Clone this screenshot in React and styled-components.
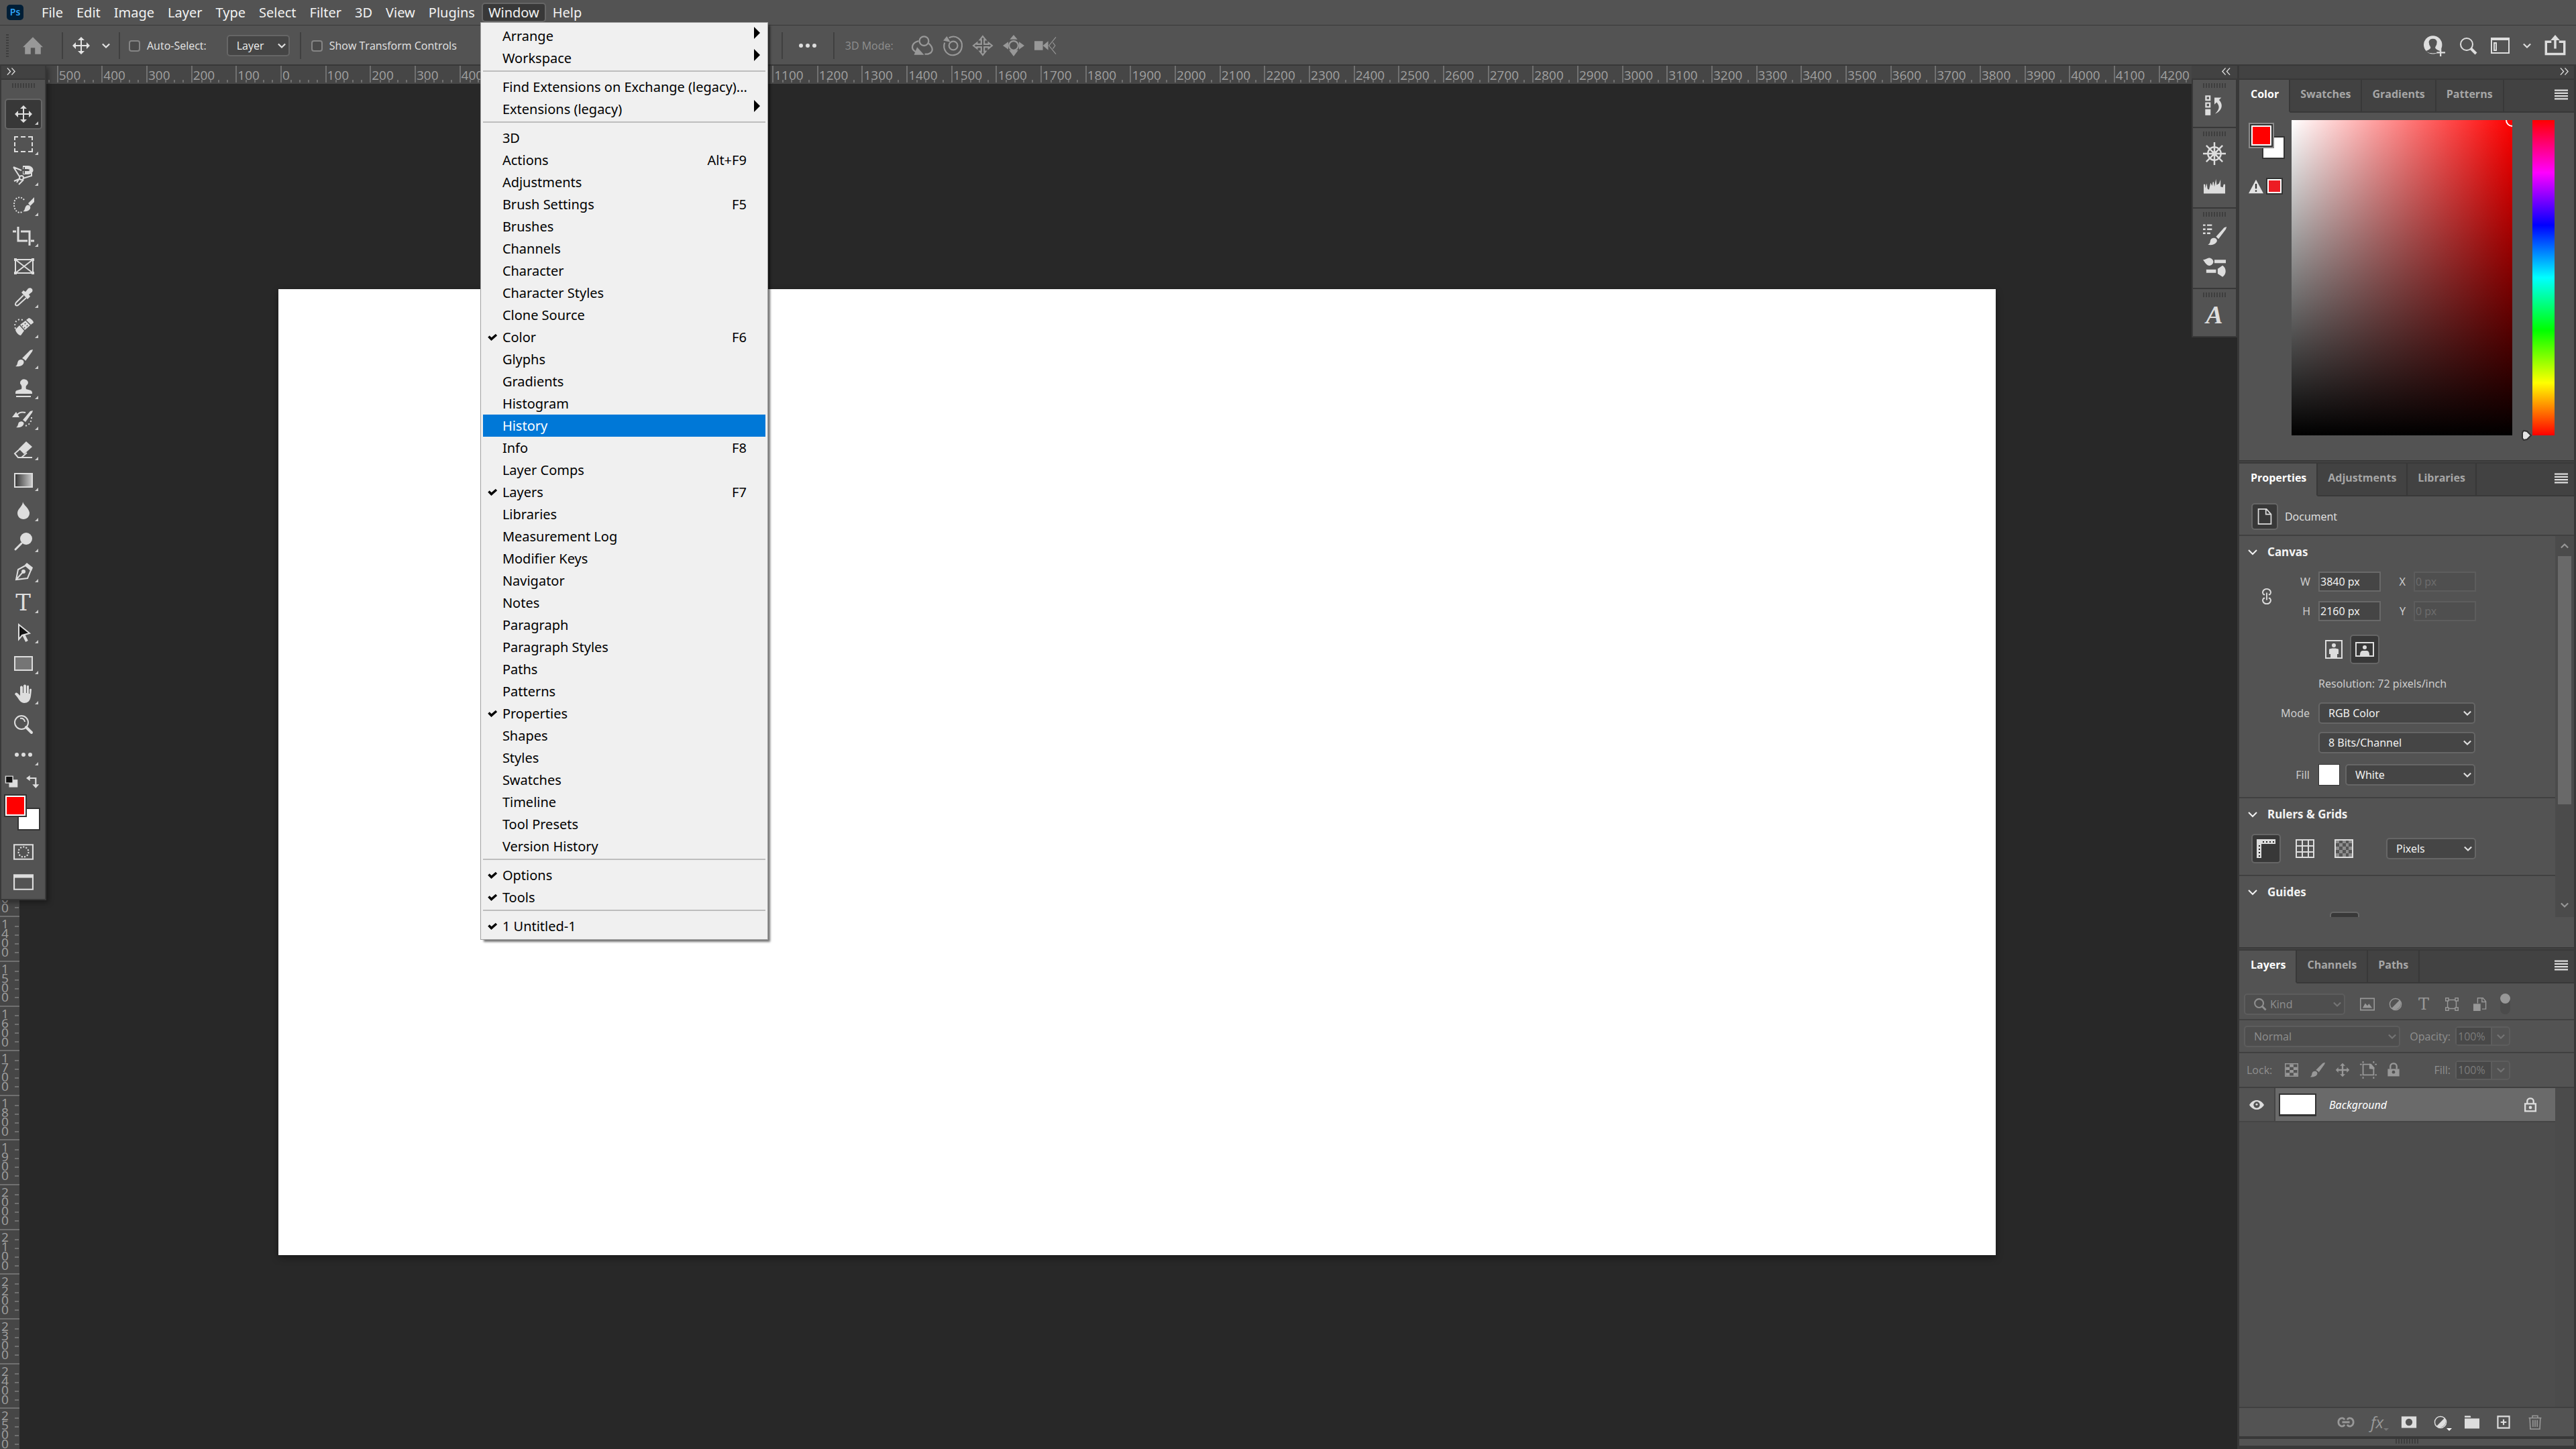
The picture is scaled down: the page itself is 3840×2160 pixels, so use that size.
import React from "react"
import styled, { createGlobalStyle, css } from "styled-components"

const colors = {
	panel: "#535353",
	line: "#383838",
	strip: "#424242",
	stage: "#282828",
	field: "#454545",
	fieldBorder: "#666666",
	text: "#e4e4e4",
	dim: "#8f8f8f",
}

const GlobalStyle = createGlobalStyle`
	*, *::before, *::after {
		box-sizing: border-box;
	}

	body {
		margin: 0;
		background: ${colors.stage};
		color: ${colors.text};
		font: 16px/24px "Open Sans", "Noto Sans", sans-serif;
	}

	button, input, select {
		margin: 0;
		padding: 0;
		border: 0;
		background: none;
		color: inherit;
		font: inherit;
	}

	svg {
		display: block;
		flex: none;
	}
`

/* ---------- icons ---------- */

function Icon({ size = 28, children, ...rest }) {
	return (
		<svg
			width={size}
			height={size}
			viewBox="0 0 28 28"
			fill="none"
			stroke="currentColor"
			strokeWidth="2"
			aria-hidden="true"
			overflow="visible"
			{...rest}
		>
			{children}
		</svg>
	)
}

const solid = { fill: "currentColor", stroke: "none" }

const MoveIcon = props => (
	<Icon {...props}>
		<path d="M14 4v20M4 14h20" />
		<path {...solid} d="M14 1l5 5h-10zM14 27l5-5h-10zM1 14l5-5v10zM27 14l-5-5v10z" />
	</Icon>
)

const MarqueeIcon = () => (
	<Icon>
		<path d="M1 8V3h5M10 3h7M21 3h6v5M27 11v6M27 20v5h-6M17 25h-7M6 25H1v-5M1 17v-6" />
	</Icon>
)

const LassoIcon = () => (
	<Icon>
		<path d="M-1 2l9 14M-1 2l12 5M8 19L4 25M13 19l13-4v-4M0 23l7-3M7 28l7-7" />
		<circle cx="11" cy="18" r="3" />
		<path {...solid} d="M13 0h8a7 6 0 010 13h-8v-5h7a2 1 0 000-3h-7z" />
		<path d="M15 2v3M15 8v4" stroke={colors.panel} strokeWidth="2" />
	</Icon>
)

const QuickSelectIcon = () => (
	<Icon>
		<path d="M15 6C11 1 4 1 1 7c-3 9 1 17 7 18 2 0 4-1 5-2" strokeDasharray="2 2" />
		<path {...solid} d="M13 23c4-1 2-6 6-9 4-1 6 2 5 5-2 4-7 5-11 4zM21 11l9-9v7l-6 6z" />
	</Icon>
)

const CropIcon = () => (
	<Icon strokeWidth="3">
		<path d="M6 0v21h14M10 7h13v21M-2 7h5M25 21h5" />
	</Icon>
)

const FrameIcon = () => (
	<Icon>
		<path d="M2 4h26v20H2zM2 4l26 20M28 4L2 24" />
		<path {...solid} d="M0 2h4v4H0zM26 2h4v4h-4zM0 22h4v4H0zM26 22h4v4h-4z" />
	</Icon>
)

const EyedropperIcon = () => (
	<Icon>
		<path d="M14 11L3 22c-3 4 1 6 4 3l11-10" />
		<path {...solid} d="M11 7l3-3 3 2 4-5c4-2 8 1 6 5l-5 4 2 3-4 4z" />
	</Icon>
)

const HealIcon = () => (
	<Icon>
		<path d="M2 16C-1 6 5 0 13 3" strokeDasharray="2 3" />
		<path {...solid} d="M18 3l4-3c2 0 7 4 7 7l-4 3zM9 10l8-6 7 7-8 7zM2 17l6-6 7 8-5 7c-3 0-8-5-8-9z" />
		<path d="M12 11l1 1M16 8l1 1M15 14l1 1M19 11l1 1" stroke={colors.panel} />
	</Icon>
)

const BrushIcon = props => (
	<Icon {...props}>
		<path {...solid} d="M2 26c4-2 2-6 5-9 5-3 9 1 7 5-2 4-8 5-12 4zM12 14L24 2l4-1-1 3-10 14c-1-2-3-3-5-4z" />
	</Icon>
)

const StampIcon = () => (
	<Icon>
		<path {...solid} d="M9 6a6 5 0 1111 2c-2 2-3 3-2 7l7 2c2 1 2 3 2 5H2c0-3 0-4 2-5l7-2c1-4 0-5-1-7-1-1-1-1-1-2z" />
		<path d="M3 26h22" />
	</Icon>
)

const HistoryBrushIcon = () => (
	<Icon>
		<path d="M5 7c3-4 8-4 12-3" />
		<path {...solid} d="M-3 11l6-8 5 8z" />
		<path {...solid} d="M3 26c4-2 2-6 5-8 4-2 8 1 6 4-2 4-7 5-11 4zM13 15L24 2l4-1-1 3-10 14z" />
		<path d="M26 11c0 6-3 12-10 13" strokeDasharray="2 3" />
	</Icon>
)

const EraserIcon = () => (
	<Icon>
		<path d="M9 13l-8 7 5 6h21M6 26h5l8-7" />
		<path {...solid} d="M18 2l9 8-12 11-8-8z" />
	</Icon>
)

const GradientIcon = () => (
	<Icon>
		<defs>
			<linearGradient id="tool-gradient">
				<stop stopColor="#333" />
				<stop offset="1" stopColor="#ccc" />
			</linearGradient>
		</defs>
		<path fill="url(#tool-gradient)" d="M1 4h26v20H1z" />
	</Icon>
)

const BlurIcon = () => (
	<Icon>
		<path {...solid} d="M13 1c1 5 10 10 10 17 0 5-4 9-9 9s-9-4-9-9C5 11 13 8 13 1z" />
	</Icon>
)

const DodgeIcon = () => (
	<Icon>
		<ellipse {...solid} cx="18" cy="10" rx="9" ry="9" />
		<path d="M11 17L2 26" strokeWidth="3" strokeLinecap="round" />
	</Icon>
)

const PenIcon = () => (
	<Icon>
		<path d="M3 26L6 11l11-6 8 7-5 12zM3 26l10-11" />
		<circle {...solid} cx="14" cy="14" r="3" />
		<path {...solid} d="M16 4l3-3 9 7-2 5z" />
	</Icon>
)

const PathSelectIcon = () => (
	<Icon>
		<path fill="#111" d="M7 2v22l5-6 11-3z" />
		<path d="M14 17l5 10" strokeWidth="4" />
	</Icon>
)

const RectangleIcon = () => (
	<Icon>
		<path fill="#757575" d="M1 4h26v20H1z" />
	</Icon>
)

const HandIcon = () => (
	<Icon>
		<path {...solid} d="M2 13c2-2 5 2 7 4V4c1-2 3-2 4 0v9h1V2c1-2 3-2 4 0v11h1V3c1-2 3-1 3 0v11h1V8c1-2 3-1 3 0-1 8 0 20-11 20-7 0-9-9-14-13z" />
	</Icon>
)

const ZoomIcon = () => (
	<Icon>
		<circle cx="11" cy="11" r="10" />
		<path d="M9 5c4-1 7 2 7 5" />
		<path d="M18 18l8 8" strokeWidth="4" strokeLinecap="round" />
	</Icon>
)

const DotsIcon = () => (
	<Icon>
		<circle {...solid} cx="4" cy="14" r="3" />
		<circle {...solid} cx="14" cy="14" r="3" />
		<circle {...solid} cx="24" cy="14" r="3" />
	</Icon>
)

const QuickMaskIcon = () => (
	<Icon size={30}>
		<path d="M1 4h26v20H1z" />
		<ellipse cx="14" cy="14" rx="7" ry="7" strokeDasharray="2 2" />
	</Icon>
)

const ScreenModeIcon = () => (
	<Icon size={30}>
		<path d="M1 4h26v20H1z" />
		<path {...solid} d="M1 4h26v4H1z" />
	</Icon>
)

const DefaultColorsIcon = () => (
	<Icon size={20}>
		<path {...solid} d="M9 10h18v16H9z" />
		<path fill="#111" d="M2 3h15v14H2z" />
	</Icon>
)

const SwapIcon = () => (
	<Icon size={20} strokeWidth="3">
		<path d="M6 7h14v14" />
		<path {...solid} d="M0 7l8-6v12zM20 28l-7-8h14z" />
	</Icon>
)

const HomeIcon = () => (
	<Icon size={30}>
		<path {...solid} d="M14 2l14 14h-3v10h-8v-9h-6v9H3V16H0z" />
	</Icon>
)

const ChevronIcon = ({ size = 12, up, ...rest }) => (
	<Icon size={size} strokeWidth="5" {...rest}>
		<path d={up ? "M2 20L14 8l12 12" : "M2 8l12 12L26 8"} />
	</Icon>
)

const Orbit3DIcon = () => (
	<Icon size={32}>
		<circle cx="17" cy="8" r="6" />
		<path d="M10 8C1 10-1 18 6 22M23 11c6 5 7 12-1 14h-4" />
		<path {...solid} d="M4 26l4-10 9 10z" />
	</Icon>
)

const Roll3DIcon = () => (
	<Icon size={30}>
		<circle cx="15" cy="14" r="6" />
		<path d="M9 3c10-5 19 3 18 12-1 12-15 16-22 8-3-4-4-8-2-13" />
		<path {...solid} d="M1 7l5-6 5 8z" />
	</Icon>
)

const Pan3DIcon = () => (
	<Icon size={30}>
		<path d="M14 1l4 5h-2v6h6v-2l5 4-5 4v-2h-6v6h2l-4 5-4-5h2v-6H6v2l-5-4 5-4v2h6V6h-2z" />
	</Icon>
)

const Slide3DIcon = () => (
	<Icon size={32}>
		<circle cx="14" cy="14" r="6" />
		<path {...solid} d="M14 0l5 6H9zM14 28l6-8H8zM0 14l7-5v10zM28 14l-7-5v10z" />
	</Icon>
)

const Camera3DIcon = () => (
	<Icon size={32}>
		<path {...solid} d="M0 8h11v12H0zM11 14l7-6v12z" />
		<path d="M28 3L19 14l9 11M24 10l3 4-3 4" strokeWidth="1" />
	</Icon>
)

const UserAddIcon = () => (
	<Icon size={32}>
		<circle {...solid} cx="12" cy="13" r="12" />
		<path fill={colors.panel} stroke="none" d="M12 5c4 0 6 3 5 6 0 3-2 4-2 6 1 2 4 3 6 4-3 4-15 4-18 0 2-1 5-2 6-4 0-2-2-3-2-6-1-3 1-6 5-6z" />
		<path d="M22 18v10M17 23h11" />
	</Icon>
)

const SearchIcon = props => (
	<Icon {...props}>
		<circle cx="12" cy="12" r="9" />
		<path d="M18 18l8 8" strokeWidth="4" />
	</Icon>
)

const WorkspaceIcon = () => (
	<Icon>
		<path d="M1 3h26v22H1z" />
		<path {...solid} d="M1 2h26v4H1z" />
		<path d="M5 10h3v11H5z" />
	</Icon>
)

const ShareIcon = () => (
	<Icon size={32} strokeWidth="3">
		<path d="M9 9H2v16h24V9h-7M14 6v12" />
		<path {...solid} d="M14 0l6 7H8z" />
	</Icon>
)

const HistoryPanelIcon = () => (
	<Icon size={32}>
		<path d="M3 2h5v5H3zM3 11h5v5H3z" />
		<path {...solid} d="M2 19h7v8H2z" />
		<path {...solid} d="M14 4h9l-3 3c6 6 4 14-5 18 6-6 6-10 2-15l-3 3z" />
	</Icon>
)

const NavigatorIcon = () => (
	<Icon size={34} strokeWidth="2">
		<circle cx="14" cy="14" r="8" />
		<path d="M14 0v28M0 14h28M4 4l20 20M24 4L4 24" />
		<circle {...solid} cx="14" cy="14" r="3" />
	</Icon>
)

const HistogramIcon = () => (
	<Icon size={32}>
		<path {...solid} d="M0 24V12h2v5l2-6 1 7 2 1 2-9 2 4 1-5h1l1 6 2-10 1 8 3-2 2-5v9l3 1 1-4h2v12z" />
	</Icon>
)

const BrushSettingsIcon = () => (
	<Icon size={34}>
		<path d="M0 3h3M0 8h3M0 13h3M5 3h6M5 8h6M5 13h4" />
		<path {...solid} d="M6 27c4-2 2-5 4-7 4-3 8 0 7 3-2 4-7 5-11 4zM16 17L26 6l3-1-1 3-9 12z" />
	</Icon>
)

const BrushesIcon = () => (
	<Icon size={34} strokeWidth="4">
		<path d="M14 8h14M4 20h12" />
		<path {...solid} d="M0 6c4 0 6-3 9-2 5 2 5 7 0 9-4 1-6-3-9-7zM18 17l6-4c5 3 5 11 0 14l-6-4z" />
	</Icon>
)

const DoubleChevronIcon = ({ left }) => (
	<Icon size={13} strokeWidth="3">
		<path d={left ? "M12 3L2 14l10 11M26 3L16 14l10 11" : "M2 3l10 11L2 25M16 3l10 11-10 11"} />
	</Icon>
)

const PanelMenuIcon = () => (
	<Icon size={20}>
		<path d="M0 5h28M0 11h28M0 17h28M0 23h28" strokeWidth="3" />
	</Icon>
)

const WarningIcon = () => (
	<Icon size={22}>
		<path {...solid} d="M14 1l14 26H0z" />
		<path d="M14 9v9M14 21v3" stroke="#333" strokeWidth="3" />
	</Icon>
)

const DocumentIcon = () => (
	<Icon size={24}>
		<path d="M3 1h14l8 9v17H3zM16 1v9h8" />
	</Icon>
)

const LinkIcon = () => (
	<Icon size={26}>
		<path d="M11 11H9C6 8 8 2 14 2s8 6 5 9h-2M11 17H9c-3 3-1 9 5 9s8-6 5-9h-2M14 8v12" />
	</Icon>
)

const PortraitIcon = () => (
	<Icon>
		<path d="M2 1h24v26H2z" />
		<circle {...solid} cx="14" cy="8" r="3" />
		<path {...solid} d="M7 14c1-2 13-2 14 0v7h-2v5H9v-5H7z" />
	</Icon>
)

const LandscapeIcon = () => (
	<Icon>
		<path d="M1 4h26v20H1z" />
		<circle {...solid} cx="14" cy="11" r="3" />
		<path {...solid} d="M7 23c0-4 1-7 4-7h6c3 0 4 3 4 7z" />
	</Icon>
)

const RulersIcon = () => (
	<Icon>
		<path {...solid} d="M0 0h28v7H7v21H0z" />
		<path d="M9 4h18" stroke="#222" strokeDasharray="2 3" />
		<path d="M4 9v18" stroke="#222" strokeDasharray="2 3" />
	</Icon>
)

const GridIcon = () => (
	<Icon>
		<path d="M1 1h26v26H1zM10 1v26M19 1v26M1 10h26M1 19h26" />
	</Icon>
)

const TransparencyIcon = () => (
	<Icon>
		<path fill="#8d8d8d" d="M1 1h26v26H1z" />
		<path fill="#555" stroke="none" d="M2 6h5v5H2zM12 6h5v5h-5zM21 6h5v5h-5zM7 2h5v4H7zM17 2h4v4h-4zM7 11h5v5H7zM17 11h4v5h-4zM2 16h5v5H2zM12 16h5v5h-5zM21 16h5v5h-5zM7 21h5v5H7zM17 21h4v5h-4z" />
	</Icon>
)

const ImageFilterIcon = () => (
	<Icon size={22}>
		<path d="M1 3h26v22H1z" />
		<path {...solid} d="M5 21l5-9 4 5 3-4 6 8z" />
	</Icon>
)

const AdjustmentIcon = () => (
	<Icon size={20}>
		<circle cx="14" cy="14" r="12" />
		<path {...solid} d="M23 5A13 13 0 015 23z" />
	</Icon>
)

const ShapeFilterIcon = () => (
	<Icon size={20}>
		<path d="M5 5h18v18H5z" />
		<path fill={colors.panel} d="M1 1h6v6H1zM21 1h6v6h-6zM1 21h6v6H1zM21 21h6v6h-6z" />
	</Icon>
)

const SmartFilterIcon = () => (
	<Icon size={20}>
		<path d="M9 12V1h11l6 7v16h-8M18 1v8h8" />
		<path {...solid} d="M0 13h15v15H0z" />
	</Icon>
)

const CheckerIcon = () => (
	<Icon size={20}>
		<path d="M1 1h26v26H1z" />
		<path {...solid} d="M10 2h8v6h-8zM2 8h8v6H2zM18 8h8v6h-8zM10 14h8v6h-8zM2 20h8v6H2zM18 20h8v6h-8z" />
	</Icon>
)

const ArtboardLockIcon = () => (
	<Icon size={26}>
		<path d="M6 5h11l6 6v11H6zM1 5h3M1 22h3M25 22h3M25 5h3M6 0v3M6 25v3M23 25v3M23 0v3" />
		<path {...solid} d="M16 4h3l5 6v3l-8-1z" />
	</Icon>
)

const LockSolidIcon = () => (
	<Icon size={22}>
		<path d="M8 12V7c0-7 12-7 12 0v5" strokeWidth="3" />
		<path {...solid} d="M3 12h22v14H3z" />
		<circle cx="14" cy="18" r="3" fill={colors.panel} stroke="none" />
	</Icon>
)

const LockIcon = () => (
	<Icon size={22} strokeWidth="3">
		<path d="M8 11V7c0-7 12-7 12 0v4M4 12h20v14H4z" />
		<circle {...solid} cx="14" cy="19" r="3" />
	</Icon>
)

const EyeIcon = () => (
	<Icon size={22}>
		<path {...solid} d="M0 14C7 2 21 2 28 14 21 26 7 26 0 14z" />
		<circle cx="14" cy="14" r="6" fill={colors.panel} stroke="none" />
		<circle {...solid} cx="14" cy="13" r="2" />
	</Icon>
)

const ChainIcon = () => (
	<Icon size={26} strokeWidth="3">
		<path d="M12 18c-3 5-10 2-10-4s7-9 10-4M16 10c3-5 10-2 10 4s-7 9-10 4M8 14h12" />
	</Icon>
)

const MaskIcon = () => (
	<Icon size={24}>
		<path {...solid} d="M1 4h26v20H1z" />
		<circle cx="14" cy="14" r="6" fill={colors.panel} stroke="none" />
	</Icon>
)

const FolderIcon = () => (
	<Icon size={22}>
		<path {...solid} d="M0 2h11l1 3H0zM0 7h28v19H0z" />
	</Icon>
)

const NewLayerIcon = () => (
	<Icon size={20} strokeWidth="3">
		<path d="M2 2h24v24H2zM14 8v12M8 14h12" />
	</Icon>
)

const TrashIcon = () => (
	<Icon size={22}>
		<path d="M2 6h24M9 6V2h10v4M4 6l1 21h18l1-21M10 10v13M14 10v13M18 10v13" />
	</Icon>
)

/* ---------- shared controls ---------- */

const PlainButton = styled.button`
	display: flex;
	align-items: center;
	justify-content: center;
	width: ${props => props.$width || 28}px;
	height: ${props => props.$height || 32}px;
	flex: none;
	color: ${props => (props.$dim ? "#989898" : "#dddddd")};
`

const ToggleButton = styled.button`
	display: flex;
	align-items: center;
	justify-content: center;
	width: ${props => props.$size || 44}px;
	height: ${props => props.$size || 44}px;
	flex: none;
	border: 2px solid transparent;
	border-radius: 5px;
	color: #dddddd;

	${props => props.$active && css`
		background: #383838;
		border-color: ${colors.fieldBorder};
	`}
`

const SelectBox = styled.span`
	display: grid;
	align-items: center;
	width: ${props => (props.$width ? `${props.$width}px` : "auto")};
	flex: ${props => (props.$width ? "none" : "1")};
	color: ${props => (props.$dim ? colors.dim : "#f0f0f0")};

	& > * {
		grid-area: 1 / 1;
	}

	& > svg {
		justify-self: end;
		margin-right: 6px;
		color: ${props => (props.$dim ? "#747474" : "#e0e0e0")};
		pointer-events: none;
	}
`

const SelectElement = styled.select`
	width: 100%;
	height: 32px;
	padding: 0 20px 0 ${props => props.$inset || 13}px;
	appearance: none;
	background: ${props => (props.$dim ? "#4e4e4e" : colors.field)};
	border: 2px solid ${props => (props.$dim ? "#5d5d5d" : colors.fieldBorder)};
	border-radius: 5px;
	opacity: 1;
	color: inherit;
`

const SelectLead = styled.span`
	z-index: 1;
	margin-left: 14px;
	pointer-events: none;
`

function Select({ id, label, value, width, dim, inset, lead }) {
	return (
		<SelectBox $width={width} $dim={dim}>
			<SelectElement id={id} aria-label={label} defaultValue={value} disabled={dim} $dim={dim} $inset={inset}>
				<option>{value}</option>
			</SelectElement>
			{lead && <SelectLead>{lead}</SelectLead>}
			<ChevronIcon />
		</SelectBox>
	)
}

const Grip = styled.div`
	width: ${props => (props.$vertical ? 4 : 34)}px;
	height: ${props => (props.$vertical ? 34 : 7)}px;
	flex: none;
	background: repeating-linear-gradient(
		${props => (props.$vertical ? "180deg" : "90deg")},
		#3e3e3e 0 2px,
		transparent 2px 4px
	);
`

/* ---------- menu bar ---------- */

const menuNames = ["File", "Edit", "Image", "Layer", "Type", "Select", "Filter", "3D", "View", "Plugins", "Window", "Help"]

const windowMenu = [
	[
		{ name: "Arrange", sub: true },
		{ name: "Workspace", sub: true },
	],
	[
		{ name: "Find Extensions on Exchange (legacy)..." },
		{ name: "Extensions (legacy)", sub: true },
	],
	[
		{ name: "3D" },
		{ name: "Actions", keys: "Alt+F9" },
		{ name: "Adjustments" },
		{ name: "Brush Settings", keys: "F5" },
		{ name: "Brushes" },
		{ name: "Channels" },
		{ name: "Character" },
		{ name: "Character Styles" },
		{ name: "Clone Source" },
		{ name: "Color", keys: "F6", checked: true },
		{ name: "Glyphs" },
		{ name: "Gradients" },
		{ name: "Histogram" },
		{ name: "History", active: true },
		{ name: "Info", keys: "F8" },
		{ name: "Layer Comps" },
		{ name: "Layers", keys: "F7", checked: true },
		{ name: "Libraries" },
		{ name: "Measurement Log" },
		{ name: "Modifier Keys" },
		{ name: "Navigator" },
		{ name: "Notes" },
		{ name: "Paragraph" },
		{ name: "Paragraph Styles" },
		{ name: "Paths" },
		{ name: "Patterns" },
		{ name: "Properties", checked: true },
		{ name: "Shapes" },
		{ name: "Styles" },
		{ name: "Swatches" },
		{ name: "Timeline" },
		{ name: "Tool Presets" },
		{ name: "Version History" },
	],
	[
		{ name: "Options", checked: true },
		{ name: "Tools", checked: true },
	],
	[
		{ name: "1 Untitled-1", checked: true },
	],
]

const MenuBarElement = styled.nav`
	display: flex;
	align-items: flex-start;
	height: 38px;
	padding: 4px 0 0 10px;
	border-bottom: 1px solid ${colors.line};
	background: ${colors.panel};
`

const Logo = styled.span`
	width: 25px;
	height: 23px;
	margin: 3px 17px 0 0;
	border-radius: 5px;
	background: #001e36;
	color: #31a8ff;
	font-size: 14px;
	font-weight: 600;
	line-height: 22px;
	text-align: center;
`

const MenuSlot = styled.div`
	position: relative;
`

const MenuName = styled.button`
	display: block;
	height: 29px;
	padding: 0 8px;
	border: 2px solid ${props => (props.$open ? colors.fieldBorder : "transparent")};
	border-radius: 5px;
	background: ${props => (props.$open ? "#383838" : "none")};
	color: #f2f2f2;
	font-family: "Noto Sans", "Open Sans", sans-serif;
	font-size: 20px;
	line-height: 25px;
`

const MenuElement = styled.div`
	position: absolute;
	z-index: 10;
	top: 100%;
	left: -2px;
	width: 429px;
	padding: 3px 0;
	border: 1px solid #a0a0a0;
	background: #f0f0f0;
	box-shadow: 4px 4px 3px -1px rgba(0, 0, 0, 0.55);
	color: #000000;
`

const MenuItem = styled.button`
	display: grid;
	grid-template-columns: 16px 1fr auto;
	align-items: center;
	column-gap: 6px;
	width: calc(100% - 6px);
	height: 33px;
	margin: 0 3px;
	padding: 0 28px 0 7px;
	background: ${props => (props.$active ? "#0078d7" : "transparent")};
	color: ${props => (props.$active ? "#ffffff" : "#000000")};
	font-family: "Noto Sans", "Open Sans", sans-serif;
	font-size: 20px;
	line-height: 32px;
	text-align: left;
	white-space: nowrap;
`

const SubArrow = styled.svg`
	margin: 0 -20px 10px 11px;
`

const MenuLine = styled.hr`
	height: 2px;
	margin: 2px 3px 6px;
	border: 0;
	background: #bdbdbd;
`

function WindowMenu() {
	return (
		<MenuElement role="menu">
			{windowMenu.map((group, index) => (
				<React.Fragment key={index}>
					{index > 0 && <MenuLine />}
					{group.map(item => (
						<MenuItem key={item.name} role="menuitem" $active={item.active}>
							{item.checked ? (
								<Icon size={14} strokeWidth="7">
									<path d="M3 11l8 8L26 6" />
								</Icon>
							) : <span />}
							<span>{item.name}</span>
							{item.keys && <span>{item.keys}</span>}
							{item.sub && (
								<SubArrow width="9" height="18" viewBox="0 0 9 18" aria-hidden="true">
									<path d="M0 0l9 9-9 9z" />
								</SubArrow>
							)}
						</MenuItem>
					))}
				</React.Fragment>
			))}
		</MenuElement>
	)
}

function MenuBar() {
	return (
		<MenuBarElement>
			<Logo>Ps</Logo>
			{menuNames.map(name => (
				<MenuSlot key={name}>
					<MenuName $open={name === "Window"}>{name}</MenuName>
					{name === "Window" && <WindowMenu />}
				</MenuSlot>
			))}
		</MenuBarElement>
	)
}

/* ---------- options bar ---------- */

const OptionsElement = styled.header`
	display: flex;
	align-items: center;
	height: 60px;
	padding: 2px 15px 0 9px;
	border-bottom: 2px solid ${colors.line};
	background: ${colors.panel};
`

const Divider = styled.span`
	width: 2px;
	height: 40px;
	margin: 0 ${props => props.$gap}px;
	flex: none;
	background: #404040;
`

const CheckLabel = styled.label`
	display: flex;
	align-items: center;
	gap: 10px;
	white-space: nowrap;
`

const CheckInput = styled.input`
	width: 17px;
	height: 17px;
	appearance: none;
	border: 2px solid #858585;
	border-radius: 4px;
	background: #4a4a4a;
`

const AlignGroup = styled.div`
	width: 469px;
	flex: none;
`

const DimText = styled.span`
	margin-right: 26px;
	color: ${colors.dim};
`

const OptionCluster = styled.div`
	display: flex;
	align-items: center;
	gap: ${props => props.$gap || 0}px;
	margin-left: ${props => (props.$end ? "auto" : `${props.$before || 0}px`)};
`

function OptionsBar() {
	return (
		<OptionsElement>
			<Grip $vertical />
			<OptionCluster $before={6}>
				<PlainButton $width={60} $dim aria-label="Home"><HomeIcon /></PlainButton>
			</OptionCluster>
			<Divider $gap={13} />
			<OptionCluster $gap={17}>
				<MoveIcon />
				<ChevronIcon />
			</OptionCluster>
			<Divider $gap={13} />
			<CheckLabel>
				<CheckInput type="checkbox" />
				Auto-Select:
			</CheckLabel>
			<OptionCluster $before={30}>
				<Select label="Auto-select target" value="Layer" width={94} />
			</OptionCluster>
			<Divider $gap={15} />
			<CheckLabel>
				<CheckInput type="checkbox" />
				Show Transform Controls
			</CheckLabel>
			<AlignGroup />
			<Divider $gap={15} />
			<PlainButton $width={44} aria-label="More options"><DotsIcon /></PlainButton>
			<Divider $gap={16} />
			<DimText>3D Mode:</DimText>
			<OptionCluster $gap={15}>
				<PlainButton $width={32} $dim aria-label="Orbit"><Orbit3DIcon /></PlainButton>
				<PlainButton $width={30} $dim aria-label="Roll"><Roll3DIcon /></PlainButton>
				<PlainButton $width={30} $dim aria-label="Pan"><Pan3DIcon /></PlainButton>
				<PlainButton $width={32} $dim aria-label="Slide"><Slide3DIcon /></PlainButton>
				<PlainButton $width={32} $dim aria-label="Camera"><Camera3DIcon /></PlainButton>
			</OptionCluster>
			<OptionCluster $gap={20} $end>
				<PlainButton $width={32} aria-label="Invite"><UserAddIcon /></PlainButton>
				<PlainButton aria-label="Search"><SearchIcon /></PlainButton>
				<PlainButton aria-label="Workspace"><WorkspaceIcon /></PlainButton>
				<PlainButton $width={12} aria-label="Workspace list"><ChevronIcon /></PlainButton>
				<PlainButton $width={32} aria-label="Share"><ShareIcon /></PlainButton>
			</OptionCluster>
		</OptionsElement>
	)
}

/* ---------- toolbox ---------- */

const TypeGlyph = styled.span`
	font-family: "DejaVu Serif", serif;
	font-size: ${props => props.$size}px;
	line-height: 28px;
`

const tools = [
	{ name: "Move", icon: <MoveIcon />, active: true },
	{ name: "Rectangular Marquee", icon: <MarqueeIcon /> },
	{ name: "Magnetic Lasso", icon: <LassoIcon /> },
	{ name: "Quick Selection", icon: <QuickSelectIcon /> },
	{ name: "Crop", icon: <CropIcon /> },
	{ name: "Frame", icon: <FrameIcon />, single: true },
	{ name: "Eyedropper", icon: <EyedropperIcon /> },
	{ name: "Spot Healing Brush", icon: <HealIcon /> },
	{ name: "Brush", icon: <BrushIcon /> },
	{ name: "Clone Stamp", icon: <StampIcon /> },
	{ name: "History Brush", icon: <HistoryBrushIcon /> },
	{ name: "Eraser", icon: <EraserIcon /> },
	{ name: "Gradient", icon: <GradientIcon /> },
	{ name: "Blur", icon: <BlurIcon /> },
	{ name: "Dodge", icon: <DodgeIcon /> },
	{ name: "Pen", icon: <PenIcon /> },
	{ name: "Type", icon: <TypeGlyph $size={34}>T</TypeGlyph> },
	{ name: "Path Selection", icon: <PathSelectIcon /> },
	{ name: "Rectangle", icon: <RectangleIcon /> },
	{ name: "Hand", icon: <HandIcon /> },
	{ name: "Zoom", icon: <ZoomIcon />, single: true },
	{ name: "Edit Toolbar", icon: <DotsIcon /> },
]

const ToolboxElement = styled.aside`
	position: absolute;
	top: 0;
	left: 0;
	width: 69px;
	border: solid ${colors.line};
	border-width: 0 2px 2px;
	background: ${colors.panel};
	box-shadow: 3px 3px 8px rgba(0, 0, 0, 0.4);
`

const StripHeader = styled.div`
	display: flex;
	align-items: center;
	justify-content: ${props => props.$align || "flex-start"};
	height: 21px;
	flex: none;
	padding: 0 ${props => props.$pad || 8}px 2px;
	border-bottom: 2px solid ${colors.line};
	background: ${colors.strip};
	color: #dddddd;
`

const ToolboxBody = styled.div`
	display: flex;
	flex-direction: column;
	align-items: center;
	padding: 5px 4px 2px;
`

const ToolList = styled.div`
	display: flex;
	flex-direction: column;
	align-items: center;
	width: 100%;
	height: 1001px;
	margin-top: 16px;
`

const ToolButton = styled.button`
	position: relative;
	display: flex;
	align-items: center;
	justify-content: center;
	width: 56px;
	flex: 1;
	border: 2px solid ${props => (props.$active ? colors.fieldBorder : "transparent")};
	border-radius: 5px;
	background: ${props => (props.$active ? "#383838" : "none")};
	color: #dddddd;

	${props => !props.$single && css`
		&::after {
			content: "";
			position: absolute;
			right: 4px;
			bottom: 5px;
			border: solid transparent;
			border-width: 0 0 5px 5px;
			border-bottom-color: #cccccc;
		}
	`}
`

const SwatchButtons = styled.div`
	display: flex;
	justify-content: space-between;
	width: 52px;
	height: 24px;
	margin: 5px 3px 0 0;
`

const SwatchStack = styled.div`
	position: relative;
	width: 54px;
	height: 54px;
	margin: 7px 3px 9px 0;
`

const Swatch = styled.button`
	display: block;
	width: ${props => props.$size || 34}px;
	height: ${props => props.$size || 34}px;
	border: 2px solid #333333;
	box-shadow: inset 0 0 0 2px #ffffff;
	background: ${props => props.$color};

	${props => props.$back && css`
		position: absolute;
		right: 0;
		bottom: 0;
	`}

	${props => !props.$back && css`
		position: relative;
		z-index: 1;
	`}
`

function Toolbox() {
	return (
		<ToolboxElement>
			<StripHeader><DoubleChevronIcon /></StripHeader>
			<ToolboxBody>
				<Grip />
				<ToolList>
					{tools.map(tool => (
						<ToolButton key={tool.name} aria-label={tool.name} $active={tool.active} $single={tool.single}>
							{tool.icon}
						</ToolButton>
					))}
				</ToolList>
				<SwatchButtons>
					<PlainButton $width={20} $height={24} aria-label="Default colors"><DefaultColorsIcon /></PlainButton>
					<PlainButton $width={20} $height={24} aria-label="Swap colors"><SwapIcon /></PlainButton>
				</SwatchButtons>
				<SwatchStack>
					<Swatch $color="#ff0000" aria-label="Foreground color" />
					<Swatch $color="#ffffff" $back aria-label="Background color" />
				</SwatchStack>
				<PlainButton $height={45} $width={45} aria-label="Quick mask"><QuickMaskIcon /></PlainButton>
				<PlainButton $height={46} $width={45} aria-label="Screen mode"><ScreenModeIcon /></PlainButton>
			</ToolboxBody>
		</ToolboxElement>
	)
}

/* ---------- stage with rulers ---------- */

// 100 document pixels at two thirds zoom
const step = "calc(100px * 2 / 3)"

const StageElement = styled.main`
	position: relative;
	display: grid;
	grid-template: 27px 1fr / 29px 1fr;
	flex: 1;
	min-width: 0;
	overflow: hidden;
	background: ${colors.stage};
`

const RulerTop = styled.div`
	grid-column: 1 / -1;
	display: flex;
	padding-left: 18px;
	overflow: hidden;
	background: #464646;
`

const RulerLeft = styled.div`
	height: 0;
	min-height: 100%;
	padding-top: 307px;
	overflow: hidden;
	background: #464646;
`

const CellAcross = styled.div`
	position: relative;
	display: flex;
	align-items: flex-end;
	flex: 0 0 ${step};
	height: 25px;
	border-left: 2px solid #707070;
`

const CellDown = styled.div`
	display: flex;
	justify-content: space-between;
	height: ${step};
	border-top: 2px solid #707070;
`

const LabelAcross = styled.span`
	position: absolute;
	top: 0;
	left: 1px;
	color: #a0a0a0;
	font-size: 19px;
	line-height: 28px;
`

const LabelDown = styled.span`
	width: 14px;
	padding: 3px 0 0 2px;
	color: #a0a0a0;
	font-size: 19px;
	line-height: 14px;
	word-break: break-all;
`

const TicksAcross = styled.div`
	display: flex;
	width: 100%;
	height: 4px;

	& > i {
		flex: 1;
		border-left: 2px solid #707070;
	}

	& > i:first-child {
		border-color: transparent;
	}
`

const TicksDown = styled.div`
	display: flex;
	flex-direction: column;
	width: 6px;
	margin-right: 1px;

	& > i {
		flex: 1;
		border-top: 2px solid #707070;
	}

	& > i:first-child {
		border-color: transparent;
	}
`

const marks = [0, 1, 2, 3, 4]
const topValues = Array.from({ length: 49 }, (_, i) => Math.abs(i * 100 - 600))
const leftValues = Array.from({ length: 26 }, (_, i) => i * 100)

const Artboard = styled.div`
	aspect-ratio: 3840 / 2160;
	margin: 306px 292px 0 386px;
	align-self: start;
	background: #ffffff;
	box-shadow: 0 4px 10px rgba(0, 0, 0, 0.4);
`

function Stage() {
	return (
		<StageElement>
			<RulerTop>
				{topValues.map((value, index) => (
					<CellAcross key={index}>
						<LabelAcross>{value}</LabelAcross>
						<TicksAcross>{marks.map(mark => <i key={mark} />)}</TicksAcross>
					</CellAcross>
				))}
			</RulerTop>
			<RulerLeft>
				{leftValues.map(value => (
					<CellDown key={value}>
						<LabelDown>{value}</LabelDown>
						<TicksDown>{marks.map(mark => <i key={mark} />)}</TicksDown>
					</CellDown>
				))}
			</RulerLeft>
			<Artboard />
			<Toolbox />
		</StageElement>
	)
}

/* ---------- icon dock ---------- */

const DockElement = styled.aside`
	width: 68px;
	flex: none;
	background: ${colors.stage};
`

const DockBody = styled.div`
	border: solid ${colors.line};
	border-width: 0 2px;
`

const DockGroup = styled.div`
	display: flex;
	flex-direction: column;
	align-items: center;
	padding: 5px 0 8px;
	border-bottom: 2px solid ${colors.line};
	background: ${colors.panel};
`

const DockIcons = styled.div`
	display: grid;
	margin-top: 2px;
`

const CharacterGlyph = styled.span`
	font-family: "Liberation Serif", serif;
	font-size: 38px;
	font-style: italic;
	font-weight: 700;
	line-height: 44px;
`

const dock = [
	[{ name: "History", icon: <HistoryPanelIcon /> }],
	[{ name: "Navigator", icon: <NavigatorIcon /> }, { name: "Histogram", icon: <HistogramIcon /> }],
	[{ name: "Brush Settings", icon: <BrushSettingsIcon /> }, { name: "Brushes", icon: <BrushesIcon /> }],
	[{ name: "Glyphs", icon: <CharacterGlyph>A</CharacterGlyph> }],
]

function Dock() {
	return (
		<DockElement>
			<StripHeader $align="flex-end" $pad={10}><DoubleChevronIcon left /></StripHeader>
			<DockBody>
				{dock.map((group, index) => (
					<DockGroup key={index}>
						<Grip />
						<DockIcons>
							{group.map(item => (
								<PlainButton key={item.name} $width={48} $height={48} aria-label={item.name}>
									{item.icon}
								</PlainButton>
							))}
						</DockIcons>
					</DockGroup>
				))}
			</DockBody>
		</DockElement>
	)
}

/* ---------- panels ---------- */

const PanelsElement = styled.aside`
	display: flex;
	flex-direction: column;
	width: 505px;
	flex: none;
	border: solid ${colors.line};
	border-width: 0 3px;
	background: ${colors.panel};
`

const PanelGap = styled.div`
	height: 5px;
	flex: none;
	border: solid ${colors.line};
	border-width: 2px 0;
	background: #4a4a4a;
`

const TabBar = styled.div`
	display: flex;
	height: 49px;
	flex: none;
	background: ${colors.strip};
`

const Tab = styled.button`
	padding: 0 15px 5px;
	border-right: 2px solid ${colors.line};
	border-bottom: 2px solid ${props => (props.$active ? colors.panel : colors.line)};
	background: ${props => (props.$active ? colors.panel : "none")};
	color: ${props => (props.$active ? "#ffffff" : "#a6a6a6")};
	font-weight: 700;

	&:first-child {
		padding-left: 17px;
	}
`

const TabRest = styled.div`
	display: flex;
	align-items: center;
	justify-content: flex-end;
	flex: 1;
	padding: 0 9px 4px 0;
	border-bottom: 2px solid ${colors.line};
`

function Tabs({ names }) {
	return (
		<TabBar role="tablist">
			{names.map((name, index) => (
				<Tab key={name} role="tab" aria-selected={index === 0} $active={index === 0}>{name}</Tab>
			))}
			<TabRest>
				<PlainButton $width={20} aria-label="Panel menu"><PanelMenuIcon /></PlainButton>
			</TabRest>
		</TabBar>
	)
}

const ColorBody = styled.div`
	display: flex;
	height: 518px;
	flex: none;
	padding: 11px 29px 37px 14px;
`

const ColorSide = styled.div`
	width: 64px;
	flex: none;
`

const ColorStack = styled.div`
	position: relative;
	width: 54px;
	height: 54px;
	padding: 2px;
	margin-top: 4px;

	& > button:first-child {
		outline: 2px solid #8a8a8a;
	}
`

const WarningRow = styled.div`
	display: flex;
	align-items: center;
	gap: 4px;
	margin-top: 28px;
`

const ColorField = styled.div`
	flex: 1;
	overflow: hidden;
	background:
		linear-gradient(to bottom, transparent, #000000),
		linear-gradient(to right, #ffffff, #ff0000);

	&::after {
		content: "";
		display: block;
		width: 20px;
		height: 20px;
		margin: -10px -10px 0 auto;
		border: 2px solid #ffffff;
		border-radius: 50%;
	}
`

const HueBar = styled.div`
	position: relative;
	width: 33px;
	margin-left: 30px;
	background: linear-gradient(#f00, #f0f, #00f, #0ff, #0f0, #ff0, #f00);

	& > svg {
		position: absolute;
		bottom: -8px;
		left: -16px;
	}
`

function ColorPanel() {
	return (
		<>
			<Tabs names={["Color", "Swatches", "Gradients", "Patterns"]} />
			<ColorBody>
				<ColorSide>
					<ColorStack>
						<Swatch $color="#ff0000" aria-label="Foreground color" />
						<Swatch $color="#ffffff" $back aria-label="Background color" />
					</ColorStack>
					<WarningRow>
						<WarningIcon />
						<Swatch $color="#ed1c24" $size={25} aria-label="Printable color" />
					</WarningRow>
				</ColorSide>
				<ColorField />
				<HueBar>
					<svg width="16" height="16" viewBox="0 0 16 16" aria-hidden="true">
						<path d="M3 1l5 1 6 6-6 6-5 1-2-3V4z" fill="#e6e6e6" stroke="#333" strokeWidth="2" />
					</svg>
				</HueBar>
			</ColorBody>
		</>
	)
}

const DocumentRow = styled.div`
	display: flex;
	align-items: center;
	gap: 10px;
	height: 59px;
	flex: none;
	padding: 2px 18px 0;
	border-bottom: 2px solid #404040;
`

const ScrollArea = styled.div`
	display: flex;
	height: 568px;
	margin-bottom: 45px;
	flex: none;
	overflow: hidden;
	font-family: "Noto Sans", "Open Sans", sans-serif;
`

const ScrollContent = styled.div`
	flex: 1;
`

const ScrollBar = styled.div`
	display: flex;
	flex-direction: column;
	align-items: center;
	width: 28px;
	background: #4b4b4b;
	color: #aaaaaa;
`

const ScrollThumb = styled.div`
	width: 20px;
	height: 370px;
	margin-bottom: auto;
	background: #696969;
`

const SectionElement = styled.section`
	padding-bottom: 17px;

	& + & {
		border-top: 2px solid #404040;
	}
`

const SectionTitle = styled.button`
	display: flex;
	align-items: center;
	gap: 15px;
	height: 48px;
	margin-bottom: 5px;
	padding-left: 13px;
	color: #f2f2f2;
	font-size: 17px;
	font-weight: 700;
`

function Section({ title, children }) {
	return (
		<SectionElement>
			<SectionTitle><ChevronIcon size={14} strokeWidth="4" />{title}</SectionTitle>
			{children}
		</SectionElement>
	)
}

const SizeGrid = styled.div`
	display: grid;
	grid-template-columns: 14px 46px 93px 25px 93px;
	grid-auto-rows: 30px;
	align-items: center;
	gap: 14px 12px;
	padding-left: 34px;
	color: #cccccc;

	& > button {
		grid-row: span 2;
		align-self: center;
	}

	& > label {
		text-align: right;
	}
`

const SizeInput = styled.input`
	width: 93px;
	height: 30px;
	padding-left: 1px;
	border: 2px solid #696969;
	background: ${colors.field};
	color: #f0f0f0;

	&:disabled {
		border-color: #5d5d5d;
		background: #4f4f4f;
		color: #6c6c6c;
	}
`

const OrientationRow = styled.div`
	display: flex;
	gap: 2px;
	margin: 20px 0 17px;
	padding-left: 119px;
`

const ResolutionText = styled.p`
	margin: 0 0 16px;
	padding-left: 118px;
	color: #cccccc;
`

const FieldRow = styled.div`
	display: grid;
	grid-template-columns: 105px 234px;
	align-items: center;
	column-gap: 13px;
	margin-bottom: ${props => props.$after || 0}px;
	color: #cccccc;

	& > label {
		text-align: right;
	}

	& > span {
		grid-column: 2;
	}
`

const FillControls = styled.span`
	display: flex;
	gap: 8px;
`

const FillSwatch = styled.button`
	width: 32px;
	height: 32px;
	border: 1px solid #333333;
	background: #ffffff;
`

const RulersRow = styled.div`
	display: flex;
	align-items: center;
	gap: 14px;
	padding-left: 18px;

	& > span {
		margin-left: 27px;
	}
`

const GuidesRow = styled.div`
	padding-left: 135px;
`

function PropertiesPanel() {
	return (
		<>
			<Tabs names={["Properties", "Adjustments", "Libraries"]} />
			<DocumentRow>
				<ToggleButton $active $size={40} aria-label="Document"><DocumentIcon /></ToggleButton>
				Document
			</DocumentRow>
			<ScrollArea>
				<ScrollContent>
					<Section title="Canvas">
						<SizeGrid>
							<PlainButton $width={14} aria-label="Link width and height"><LinkIcon /></PlainButton>
							<label htmlFor="size-w">W</label>
							<SizeInput id="size-w" defaultValue="3840 px" />
							<label htmlFor="size-x">X</label>
							<SizeInput id="size-x" defaultValue="0 px" disabled />
							<label htmlFor="size-h">H</label>
							<SizeInput id="size-h" defaultValue="2160 px" />
							<label htmlFor="size-y">Y</label>
							<SizeInput id="size-y" defaultValue="0 px" disabled />
						</SizeGrid>
						<OrientationRow>
							<ToggleButton aria-label="Portrait"><PortraitIcon /></ToggleButton>
							<ToggleButton $active aria-label="Landscape"><LandscapeIcon /></ToggleButton>
						</OrientationRow>
						<ResolutionText>Resolution: 72 pixels/inch</ResolutionText>
						<FieldRow $after={12}>
							<label htmlFor="mode">Mode</label>
							<Select id="mode" value="RGB Color" />
						</FieldRow>
						<FieldRow $after={16}>
							<Select label="Bit depth" value="8 Bits/Channel" />
						</FieldRow>
						<FieldRow>
							<label htmlFor="fill">Fill</label>
							<FillControls>
								<FillSwatch aria-label="Fill color" />
								<Select id="fill" value="White" />
							</FillControls>
						</FieldRow>
					</Section>
					<Section title="Rulers & Grids">
						<RulersRow>
							<ToggleButton $active aria-label="Rulers"><RulersIcon /></ToggleButton>
							<ToggleButton aria-label="Grid"><GridIcon /></ToggleButton>
							<ToggleButton aria-label="Transparency grid"><TransparencyIcon /></ToggleButton>
							<Select label="Ruler units" value="Pixels" width={134} />
						</RulersRow>
					</Section>
					<Section title="Guides">
						<GuidesRow>
							<ToggleButton $active aria-label="Show guides" />
						</GuidesRow>
					</Section>
				</ScrollContent>
				<ScrollBar>
					<PlainButton $dim $height={30} aria-label="Scroll up"><ChevronIcon up /></PlainButton>
					<ScrollThumb />
					<PlainButton $dim $height={36} aria-label="Scroll down"><ChevronIcon /></PlainButton>
				</ScrollBar>
			</ScrollArea>
		</>
	)
}

const LayerRow = styled.div`
	display: flex;
	align-items: center;
	height: ${props => props.$height}px;
	flex: none;
	padding: ${props => props.$top || 0}px 95px 0 7px;
	border-bottom: 2px solid #404040;
	color: ${colors.dim};
`

const FilterButtons = styled.div`
	display: flex;
	margin-left: 12px;
`

const FilterToggle = styled.button`
	display: flex;
	align-items: flex-start;
	justify-content: center;
	width: 15px;
	height: 31px;
	margin-left: 9px;
	border-radius: 8px;
	background: #4b4b4b;

	&::before {
		content: "";
		width: 15px;
		height: 15px;
		border-radius: 50%;
		background: #989898;
	}
`

const LockLabel = styled.span`
	width: 52px;
	padding-left: 4px;
`

const ComboLabel = styled.label`
	margin: 0 7px 0 auto;
`

const Combo = styled.span`
	display: flex;
	width: 82px;
	height: 29px;
	border: 2px solid #5d5d5d;
	border-radius: 5px;

	& > input {
		width: 53px;
		padding-left: 2px;
		border-right: 2px solid #5d5d5d;
		background: #484848;
		color: #7b7b7b;
	}

	& > button {
		color: #747474;
	}
`

function PercentCombo({ id, label }) {
	return (
		<>
			<ComboLabel htmlFor={id}>{label}</ComboLabel>
			<Combo>
				<input id={id} defaultValue="100%" disabled />
				<PlainButton $width={25} $height={25} aria-label={`${label} slider`}><ChevronIcon /></PlainButton>
			</Combo>
		</>
	)
}

const LayerArea = styled.div`
	display: flex;
	flex: 1;
	background: #4d4d4d;
`

const LayerList = styled.div`
	flex: 1;
`

const LayerItem = styled.div`
	display: flex;
	height: 51px;
	border-bottom: 2px solid #454545;
`

const EyeCell = styled.div`
	display: flex;
	align-items: center;
	justify-content: center;
	width: 54px;
	border-right: 2px solid #454545;
	background: ${colors.panel};
`

const LayerContent = styled.div`
	display: flex;
	align-items: center;
	flex: 1;
	padding: 0 23px 0 5px;
	background: #6a6a6a;
	color: #ffffff;
	font-family: "Noto Sans", "Open Sans", sans-serif;
	font-style: italic;

	& > button {
		margin-left: auto;
	}
`

const LayerThumb = styled.div`
	width: 56px;
	height: 34px;
	margin-right: 19px;
	border: 2px solid #333333;
	border-bottom-width: 3px;
	background: #ffffff;
`

const LayerFooter = styled.div`
	display: flex;
	justify-content: flex-end;
	height: 44px;
	flex: none;
	padding-right: 35px;
	border-top: 2px solid #404040;
`

const FooterButton = styled.button`
	position: relative;
	display: flex;
	align-items: center;
	justify-content: center;
	width: 47px;
	color: ${props => (props.$dim ? "#989898" : "#dddddd")};

	${props => props.$arrow && css`
		&::after {
			content: "";
			position: absolute;
			right: 6px;
			bottom: 8px;
			border: solid transparent;
			border-width: 4px 4px 0;
			border-top-color: ${props.$dim ? "#777777" : "#ffffff"};
		}
	`}
`

const FxGlyph = styled.span`
	font-size: 24px;
	font-style: italic;
`

const BottomGrip = styled.div`
	display: flex;
	justify-content: center;
	height: 19px;
	flex: none;
	border: solid ${colors.line};
	border-width: 4px 0 5px;
`

function LayersPanel() {
	return (
		<>
			<Tabs names={["Layers", "Channels", "Paths"]} />
			<LayerRow $height={55} $top={8}>
				<Select label="Layer filter" value="Kind" width={151} dim inset={37} lead={<SearchIcon size={20} strokeWidth="3" />} />
				<FilterButtons>
					<PlainButton $dim $width={42} aria-label="Pixel layers"><ImageFilterIcon /></PlainButton>
					<PlainButton $dim $width={42} aria-label="Adjustment layers"><AdjustmentIcon /></PlainButton>
					<PlainButton $dim $width={42} aria-label="Type layers"><TypeGlyph $size={24}>T</TypeGlyph></PlainButton>
					<PlainButton $dim $width={42} aria-label="Shape layers"><ShapeFilterIcon /></PlainButton>
					<PlainButton $dim $width={42} aria-label="Smart objects"><SmartFilterIcon /></PlainButton>
				</FilterButtons>
				<FilterToggle aria-label="Toggle filter" />
			</LayerRow>
			<LayerRow $height={49}>
				<Select label="Blend mode" value="Normal" width={233} dim />
				<PercentCombo id="opacity" label="Opacity:" />
			</LayerRow>
			<LayerRow $height={52}>
				<LockLabel>Lock:</LockLabel>
				<PlainButton $dim $width={38} aria-label="Lock transparent pixels"><CheckerIcon /></PlainButton>
				<PlainButton $dim $width={38} aria-label="Lock image pixels"><BrushIcon size={24} /></PlainButton>
				<PlainButton $dim $width={38} aria-label="Lock position"><MoveIcon size={22} strokeWidth="3" /></PlainButton>
				<PlainButton $dim $width={38} aria-label="Lock artboard nesting"><ArtboardLockIcon /></PlainButton>
				<PlainButton $dim $width={38} aria-label="Lock all"><LockSolidIcon /></PlainButton>
				<PercentCombo id="layer-fill" label="Fill:" />
			</LayerRow>
			<LayerArea>
				<LayerList>
					<LayerItem>
						<EyeCell>
							<PlainButton aria-label="Layer visibility"><EyeIcon /></PlainButton>
						</EyeCell>
						<LayerContent>
							<LayerThumb />
							Background
							<PlainButton aria-label="Locked"><LockIcon /></PlainButton>
						</LayerContent>
					</LayerItem>
				</LayerList>
				<ScrollBar />
			</LayerArea>
			<LayerFooter>
				<FooterButton $dim aria-label="Link layers"><ChainIcon /></FooterButton>
				<FooterButton $dim $arrow aria-label="Layer style"><FxGlyph>fx</FxGlyph></FooterButton>
				<FooterButton aria-label="Add mask"><MaskIcon /></FooterButton>
				<FooterButton $arrow aria-label="New adjustment layer"><AdjustmentIcon /></FooterButton>
				<FooterButton aria-label="New group"><FolderIcon /></FooterButton>
				<FooterButton aria-label="New layer"><NewLayerIcon /></FooterButton>
				<FooterButton $dim aria-label="Delete layer"><TrashIcon /></FooterButton>
			</LayerFooter>
			<BottomGrip><Grip /></BottomGrip>
		</>
	)
}

/* ---------- page ---------- */

const Page = styled.div`
	display: flex;
	flex-direction: column;
	min-height: 100vh;
`

const Workspace = styled.div`
	display: flex;
	flex: 1;
	min-height: 0;
`

function App() {
	return (
		<Page>
			<GlobalStyle />
			<MenuBar />
			<OptionsBar />
			<Workspace>
				<Stage />
				<Dock />
				<PanelsElement>
					<StripHeader $align="flex-end" $pad={8}><DoubleChevronIcon /></StripHeader>
					<ColorPanel />
					<PanelGap />
					<PropertiesPanel />
					<PanelGap />
					<LayersPanel />
				</PanelsElement>
			</Workspace>
		</Page>
	)
}

export default App
